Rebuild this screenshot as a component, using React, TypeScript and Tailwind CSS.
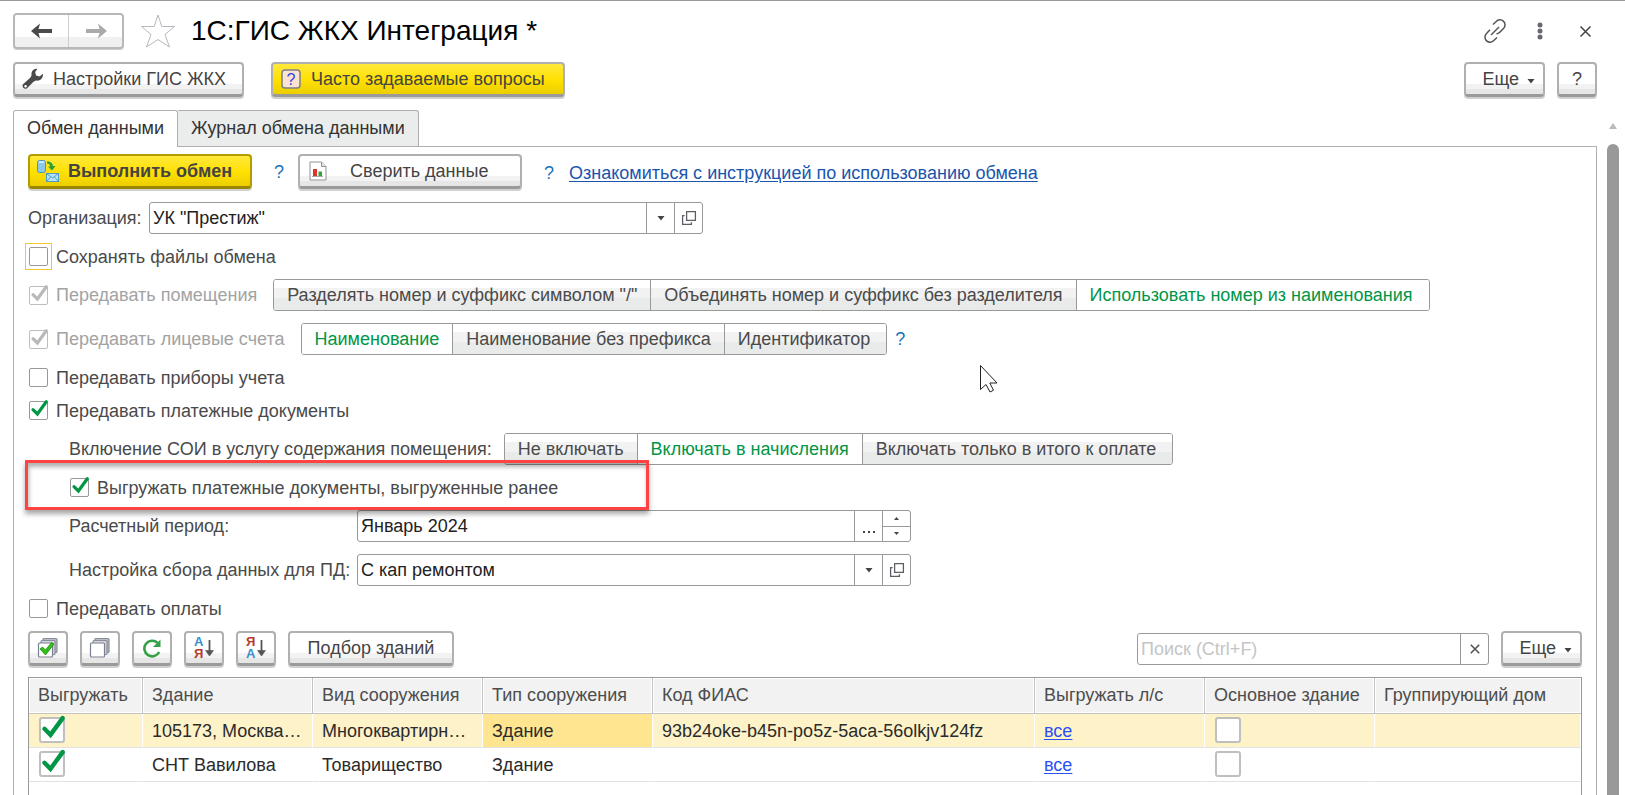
import type { ReactNode } from "react";

const cx = (...parts: (string | false | undefined)[]) => parts.filter(Boolean).join(" ");

const buttonBase =
  "flex h-[35px] shrink-0 items-center rounded-[4px] border-2 border-b-[3px] text-[18px] leading-5 shadow-[0_2px_0_#d0d0d0]";
const plain =
  "border-[#b0b0b0] border-b-[#9a9a9a] bg-[linear-gradient(#fff_66%,#f2f2f2_66%,#f2f2f2_84%,#e6e6e6_84%)] text-[#444]";
const yellow =
  "border-[#b0b0b0] border-b-[#9a9a9a] bg-[linear-gradient(#ffe93c,#ffe000_55%,#ecce00)] text-[#444]";
const yellowMain =
  "border-[#b39c00] border-b-[#998500] bg-[linear-gradient(#ffe93c,#ffe000_55%,#ecce00)] font-bold text-[#444]";

function Caret({ className = "" }: { className?: string }) {
  return (
    <svg className={className} width="8" height="5" viewBox="0 0 8 5" fill="#444" aria-hidden="true">
      <path d="M.5 0h7L4 4.500z" />
    </svg>
  );
}

function OpenIcon() {
  return (
    <svg width="16" height="16" viewBox="0 0 16 16" fill="none" stroke="#5c5f63" strokeWidth="1.3" aria-hidden="true">
      <path d="M5.6 1.6h8.8v8.8H5.6z" />
      <path d="M3.6 5.6H1.6v8.8h8.8v-2.2" />
    </svg>
  );
}

function CheckMark({ muted }: { muted?: boolean }) {
  return (
    <svg className="pointer-events-none absolute inset-0 h-full w-full overflow-visible" viewBox="0 0 19 19" aria-hidden="true">
      <path d="M4 8.600 8.400 13 17.300 .8" fill="none" stroke={muted ? "#b9b9b9" : "#009646"} strokeWidth="3.200" strokeLinecap="round" />
    </svg>
  );
}

type CheckProps = { label: string; checked?: boolean; disabled?: boolean; focused?: boolean };

function Check({ label, checked, disabled, focused }: CheckProps) {
  return (
    <label className={cx("flex items-center gap-2 whitespace-nowrap pl-px", disabled && "text-[#a3a3a3]")}>
      <span
        className={cx(
          "relative block h-[19px] w-[19px] shrink-0",
          focused && "outline outline-offset-[3px] outline-[#f2c830]",
        )}
      >
        <input
          type="checkbox"
          defaultChecked={checked}
          disabled={disabled}
          className={cx(
            "block h-full w-full appearance-none rounded-[2px] border bg-white",
            disabled ? "border-[#bdbdbd]" : "border-[#999]",
          )}
        />
        {checked && <CheckMark muted={disabled} />}
      </span>
      {label}
    </label>
  );
}

function CellCheck({ label, checked }: { label: string; checked?: boolean }) {
  return (
    <span className="relative mb-[2px] ml-px block h-[26px] w-[26px]">
      <input
        type="checkbox"
        aria-label={label}
        defaultChecked={checked}
        className="block h-full w-full appearance-none rounded-[3px] border-2 border-[#bfbfbf] bg-white"
      />
      {checked && <CheckMark />}
    </span>
  );
}

function Segmented({ name, options, value }: { name: string; options: string[]; value: string }) {
  return (
    <div role="radiogroup" aria-label={name} className="flex h-8 overflow-hidden rounded-[3px] border border-[#999]">
      {options.map((option) => (
        <label
          key={option}
          className={cx(
            "relative flex items-center whitespace-nowrap border-l border-[#999] px-[13px] first:border-l-0 last:pr-4",
            option === value
              ? "bg-white text-[#009646]"
              : "bg-[linear-gradient(#fff_27%,#f2f2f2_27%,#f2f2f2_60%,#e9ebea_60%)]",
          )}
        >
          <input type="radio" name={name} defaultChecked={option === value} className="sr-only" />
          {option}
        </label>
      ))}
    </div>
  );
}

function Field({ id, value, children }: { id: string; value: string; children: ReactNode }) {
  return (
    <div className="flex h-8 w-[554px] overflow-hidden rounded-[3px] border border-[#999] bg-white">
      <input id={id} defaultValue={value} className="min-w-0 flex-1 px-[3px] text-[#222] outline-none" />
      {children}
    </div>
  );
}

const fieldButton = "flex w-7 shrink-0 items-center justify-center border-l border-[#999]";

function Help() {
  return (
    <button type="button" className="text-[#1a72b8]">
      ?
    </button>
  );
}

function MoreButton() {
  return (
    <button type="button" className={cx(buttonBase, plain, "w-[81px] justify-end pr-2")}>
      Еще
      <Caret className="ml-2 mt-1" />
    </button>
  );
}

function StackIcon({ checked }: { checked?: boolean }) {
  return (
    <svg width="22" height="22" viewBox="0 0 22 22" aria-hidden="true">
      <g strokeWidth="1.200">
        <rect x="6" y="1.500" width="14" height="14" rx="1" fill="#b9bdc6" stroke="#8a8e99" />
        <rect x="4" y="3.500" width="14" height="14" rx="1" fill="#d3d6dc" stroke="#8a8e99" />
        <rect x="1.500" y="6" width="14" height="14" rx="1" fill="#fff" stroke="#7b8092" />
      </g>
      {checked && <path d="M3 12l2.500-2 3 3L14.500 5.500l2.500 1.500L8.500 18z" fill="#2fc11a" stroke="#1c8f0e" strokeWidth=".8" />}
    </svg>
  );
}

function SortIcon({ first, second }: { first: string; second: string }) {
  const tone = (letter: string) => (letter === "А" ? "#3a8ed0" : "#b8392b");
  return (
    <svg width="22" height="26" viewBox="0 0 22 26" aria-hidden="true">
      <g fontFamily="Liberation Sans, sans-serif" fontSize="13" fontWeight="bold">
        <text x="1" y="11" fill={tone(first)}>{first}</text>
        <text x="1" y="23" fill={tone(second)}>{second}</text>
      </g>
      <path d="M16.500 5v13" stroke="#555" strokeWidth="1.800" />
      <path d="M12.500 15.500h8L16.500 21z" fill="#555" stroke="#555" strokeWidth=".6" />
    </svg>
  );
}

const toolButtons = [
  { label: "Отметить все", icon: <StackIcon checked /> },
  { label: "Снять отметки", icon: <StackIcon /> },
  {
    label: "Обновить",
    icon: (
      <svg width="20" height="20" viewBox="0 0 20 20" aria-hidden="true">
        <path d="M17.200 14A7.800 7.800 0 1 1 15.500 4.800" fill="none" stroke="#35a047" strokeWidth="2.600" />
        <path d="M18.500 1.500v7.500H11z" fill="#35a047" />
      </svg>
    ),
  },
  { label: "По возрастанию", icon: <SortIcon first="А" second="Я" /> },
  { label: "По убыванию", icon: <SortIcon first="Я" second="А" /> },
];

const columns = [
  { title: "Выгружать", width: "w-[114px]" },
  { title: "Здание", width: "w-[170px]" },
  { title: "Вид сооружения", width: "w-[170px]" },
  { title: "Тип сооружения", width: "w-[170px]" },
  { title: "Код ФИАС", width: "w-[382px]" },
  { title: "Выгружать л/с", width: "w-[170px]" },
  { title: "Основное здание", width: "w-[170px]" },
  { title: "Группирующий дом", width: "" },
];

const buildings = [
  { name: "105173, Москва…", kind: "Многоквартирн…", type: "Здание", code: "93b24oke-b45n-po5z-5aca-56olkjv124fz", active: true },
  { name: "СНТ Вавилова", kind: "Товарищество", type: "Здание", code: "", active: false },
];

function BuildingsTable() {
  const cell = "h-[34px] overflow-hidden whitespace-nowrap border-b border-[#e2e2e2] border-r border-r-white p-0 pl-[9px]";
  return (
    <div className="flex-1 border border-b-0 border-[#999]">
      <table className="w-full table-fixed border-separate border-spacing-0 text-left">
        <thead>
          <tr>
            {columns.map((col) => (
              <th
                key={col.title}
                className={cx(
                  "h-9 whitespace-nowrap border-b border-r border-[#c4c4c4] bg-[#f2f2f2] p-0 pb-px pl-[9px] font-normal text-[#4d4d4d] shadow-[inset_0_0_0_1px_#fff] last:border-r-0",
                  col.width,
                )}
              >
                {col.title}
              </th>
            ))}
          </tr>
        </thead>
        <tbody className="text-[#2b2b2b]">
          {buildings.map((b) => (
            <tr key={b.name} className={b.active ? "bg-[#fdf2c8]" : "bg-white"}>
              <td className={cell}>
                <CellCheck label="Выгружать" checked />
              </td>
              <td className={cell}>{b.name}</td>
              <td className={cell}>{b.kind}</td>
              <td className={cx(cell, b.active && "bg-[#ffe590]")}>{b.type}</td>
              <td className={cell}>{b.code}</td>
              <td className={cell}>
                <a href="#accounts" className="text-[#2b50f5] underline underline-offset-2">
                  все
                </a>
              </td>
              <td className={cell}>
                <CellCheck label="Основное здание" />
              </td>
              <td className={cell} />
            </tr>
          ))}
        </tbody>
      </table>
    </div>
  );
}

function TitleBar() {
  return (
    <header className="flex h-9 items-center">
      <div className="flex h-9 w-[111px] rounded-[4px] border-2 border-[#b8b8b8] bg-[linear-gradient(#fff_70%,#f0f0f0_70%)] shadow-[0_1px_0_#ccc]">
        <button type="button" aria-label="Назад" className="flex flex-1 items-center justify-center border-r border-[#ccc]">
          <svg width="22" height="16" viewBox="0 0 22 16" fill="#4a4a4a" aria-hidden="true">
            <path d="M0 8 9 .5 7.500 6H21v4H7.500L9 15.500z" />
          </svg>
        </button>
        <button type="button" aria-label="Вперед" className="flex flex-1 items-center justify-center">
          <svg width="22" height="16" viewBox="0 0 22 16" fill="#aaa" aria-hidden="true">
            <path d="M22 8 13 .5 14.500 6H1v4h13.500L13 15.500z" />
          </svg>
        </button>
      </div>
      <button type="button" aria-label="В избранное" className="ml-4">
        <svg width="36" height="34" viewBox="0 0 36 34" fill="#fff" stroke="#b5b8be" aria-hidden="true">
          <path d="M18 1 21.800 12.500H34.500L25 20.500 29.500 33 18 25.500 6.500 33 11 20.500 1.500 12.500H14.200z" />
        </svg>
      </button>
      <h1 className="ml-[15px] text-[28px] leading-9 text-black">1С:ГИС ЖКХ Интеграция *</h1>
      <div className="ml-auto flex items-center pr-[5px]">
        <button type="button" aria-label="Получить ссылку">
          <svg width="24" height="24" viewBox="0 0 24 24" fill="none" stroke="#555" strokeWidth="1.500" aria-hidden="true">
            <path d="M10 5.500 13.200 2.500a4.800 4.800 0 0 1 7.500 6.800L16.500 13.500a4 4 0 0 1-3 1.200" />
            <path d="M14 18.500 10.800 21.500a4.800 4.800 0 0 1-7.500-6.800L7 10.800" />
            <path d="M8 16l8-8" />
          </svg>
        </button>
        <button type="button" aria-label="Меню" className="ml-7">
          <svg width="10" height="18" viewBox="0 0 10 18" fill="#666a70" aria-hidden="true">
            <circle cx="5" cy="3" r="2.500" />
            <circle cx="5" cy="9" r="2.500" />
            <circle cx="5" cy="15" r="2.500" />
          </svg>
        </button>
        <button type="button" aria-label="Закрыть" className="ml-[34px]">
          <svg width="13" height="13" viewBox="0 0 13 13" fill="none" stroke="#444" strokeWidth="1.500" aria-hidden="true">
            <path d="M1.500 1.500l10 10M11.500 1.500l-10 10" />
          </svg>
        </button>
      </div>
    </header>
  );
}

function CommandBar() {
  return (
    <div className="mt-[13px] flex">
      <button type="button" className={cx(buttonBase, plain, "w-[231px] pl-[7px]")}>
        <svg width="22" height="22" viewBox="0 0 22 22" fill="#4a4a4a" aria-hidden="true">
          <path d="M15.500 .8C11.500 .5 8.800 3.500 9.600 7.300L8.500 9.500 1 16.300c-1.600 1.800.9 5.400 3.800 4.300L11.500 13.800l2.500-1.200c3.700.8 7.300-2 7-6.800L17.500 8.500 14 7.500l-.8-3.500z" />
          <circle cx="3.600" cy="18.200" r="1.200" fill="#fff" />
        </svg>
        <span className="ml-[9px]">Настройки ГИС ЖКХ</span>
      </button>
      <button type="button" className={cx(buttonBase, yellow, "ml-[27px] w-[294px] pl-2")}>
        <svg width="20" height="20" viewBox="0 0 20 20" aria-hidden="true">
          <rect x="1" y="1" width="18" height="18" rx="3" fill="#fce3d0" stroke="#7c7f88" strokeWidth="1.500" />
          <text x="10" y="16" textAnchor="middle" fontFamily="Liberation Sans, sans-serif" fontSize="16" fill="#3344e6">?</text>
        </svg>
        <span className="ml-[10px]">Часто задаваемые вопросы</span>
      </button>
      <div className="ml-auto flex gap-3">
        <MoreButton />
        <button type="button" className={cx(buttonBase, plain, "w-10 justify-center")}>
          ?
        </button>
      </div>
    </div>
  );
}

function ExchangeActions() {
  return (
    <div className="flex h-9 items-start">
      <button type="button" className={cx(buttonBase, yellowMain, "w-[224px] pl-[7px]")}>
        <svg width="22" height="24" viewBox="0 0 22 24" aria-hidden="true">
          <rect x=".500" y="1.500" width="8" height="12" rx="2" fill="#8cc8ea" stroke="#4d94bd" />
          <ellipse cx="4.500" cy="3" rx="3" ry="1" fill="#d9f0fb" />
          <path d="M10 2.500c4 0 5.500 1.500 6 4.500h2.500L15 11.500 11 7.500h2.200c-.2-2-1.200-3-3.200-3z" fill="#2f9e2f" />
          <rect x="9.500" y="14.500" width="12" height="8" fill="#b8e2f7" stroke="#4d9bc8" />
          <path d="M9.500 14.500l6 4.500 6-4.500M9.500 22.500l4-4.500M21.500 22.500l-4-4.500" fill="none" stroke="#4d9bc8" />
        </svg>
        <span className="ml-[9px]">Выполнить обмен</span>
      </button>
      <div className="flex h-[35px] items-center px-[22px] pr-[14px]">
        <Help />
      </div>
      <button type="button" className={cx(buttonBase, plain, "w-[224px] pl-[9px]")}>
        <svg width="18" height="20" viewBox="0 0 18 20" aria-hidden="true">
          <path d="M1 1h11.500L17 5.500V19H1z" fill="#fff" stroke="#8d9299" />
          <path d="M12.500 1v4.500H17" fill="#e4e6e9" stroke="#8d9299" />
          <path d="M4 8h4v7H4z" fill="#e0332b" />
          <path d="M9.500 10.500h3.500V15H9.500z" fill="#2fa53a" />
          <path d="M3 15.500h11" stroke="#aaa" />
        </svg>
        <span className="ml-[23px]">Сверить данные</span>
      </button>
      <div className="flex h-[38px] items-center gap-[15px] pl-[22px]">
        <Help />
        <a href="#guide" className="text-[#1a55ad] underline underline-offset-2">
          Ознакомиться с инструкцией по использованию обмена
        </a>
      </div>
    </div>
  );
}

function ListToolbar() {
  return (
    <div className="flex h-[34px] items-start gap-3">
      {toolButtons.map((tool) => (
        <button key={tool.label} type="button" aria-label={tool.label} className={cx(buttonBase, plain, "w-10 justify-center")}>
          {tool.icon}
        </button>
      ))}
      <button type="button" className={cx(buttonBase, plain, "w-[166px] justify-center")}>
        Подбор зданий
      </button>
      <div className="ml-auto mt-[2px] flex h-8 w-[352px] overflow-hidden rounded-[3px] border border-[#999]">
        <input
          type="search"
          aria-label="Поиск"
          placeholder="Поиск (Ctrl+F)"
          className="min-w-0 flex-1 px-[3px] outline-none placeholder:text-[#c3c6c6]"
        />
        <button type="button" aria-label="Очистить" className={fieldButton}>
          <svg width="10" height="10" viewBox="0 0 10 10" stroke="#555" strokeWidth="1.600" aria-hidden="true">
            <path d="M.8 .8l8.400 8.400M9.200 .8L.8 9.200" />
          </svg>
        </button>
      </div>
      <MoreButton />
    </div>
  );
}

function ExchangePanel() {
  const checkRow = "flex h-[21px] items-center";
  return (
    <section className="flex flex-1 flex-col gap-3 border border-b-0 border-[#b0b0b0] px-[14px] pt-[7px]">
      <ExchangeActions />
      <div className="flex items-center">
        <label htmlFor="org" className="w-[121px]">Организация:</label>
        <Field id="org" value={'УК "Престиж"'}>
          <button type="button" aria-label="Выбрать" className={fieldButton}><Caret /></button>
          <button type="button" aria-label="Открыть" className={fieldButton}><OpenIcon /></button>
        </Field>
      </div>
      <div className={checkRow}>
        <Check label="Сохранять файлы обмена" focused />
      </div>
      <div className="flex items-center gap-4">
        <Check label="Передавать помещения" checked disabled />
        <Segmented
          name="Номер помещения"
          options={[
            'Разделять номер и суффикс символом "/"',
            "Объединять номер и суффикс без разделителя",
            "Использовать номер из наименования",
          ]}
          value="Использовать номер из наименования"
        />
      </div>
      <div className="flex items-center gap-4">
        <Check label="Передавать лицевые счета" checked disabled />
        <div className="flex items-center gap-2">
          <Segmented
            name="Номер лицевого счета"
            options={["Наименование", "Наименование без префикса", "Идентификатор"]}
            value="Наименование"
          />
          <Help />
        </div>
      </div>
      <div className={checkRow}>
        <Check label="Передавать приборы учета" />
      </div>
      <div className={checkRow}>
        <Check label="Передавать платежные документы" checked />
      </div>
      <div className="flex items-center gap-3 pl-[41px]">
        <span>Включение СОИ в услугу содержания помещения:</span>
        <Segmented
          name="Включение СОИ"
          options={["Не включать", "Включать в начисления", "Включать только в итого к оплате"]}
          value="Включать в начисления"
        />
      </div>
      <div className="relative flex h-[21px] items-center pl-[41px]">
        <Check label="Выгружать платежные документы, выгруженные ранее" checked />
        {/* callout frame around the option */}
        <div className="pointer-events-none absolute -left-[3px] -top-[17px] h-[50px] w-[624px] border-3 border-[#ff4343] shadow-[0_4px_5px_rgba(0,0,0,0.35),inset_1px_4px_4px_rgba(0,0,0,0.3)]" />
      </div>
      <div className="flex items-center pl-[41px]">
        <label htmlFor="period" className="w-[288px]">Расчетный период:</label>
        <Field id="period" value="Январь 2024">
          <button type="button" aria-label="Выбрать период" className={fieldButton}>
            <svg className="mt-3" width="12" height="2" viewBox="0 0 12 2" fill="#444" aria-hidden="true">
              <path d="M0 0h2v2H0zM5 0h2v2H5zM10 0h2v2h-2z" />
            </svg>
          </button>
          <div className="flex w-7 flex-col border-l border-[#999]">
            <button type="button" aria-label="Следующий" className="flex flex-1 items-center justify-center border-b border-[#999]">
              <svg width="5" height="3" viewBox="0 0 5 3" fill="#444" aria-hidden="true"><path d="M0 3h5L2.500 0z" /></svg>
            </button>
            <button type="button" aria-label="Предыдущий" className="flex flex-1 items-center justify-center">
              <svg width="5" height="3" viewBox="0 0 5 3" fill="#444" aria-hidden="true"><path d="M0 0h5L2.500 3z" /></svg>
            </button>
          </div>
        </Field>
      </div>
      <div className="flex items-center pl-[41px]">
        <label htmlFor="preset" className="w-[288px]">Настройка сбора данных для ПД:</label>
        <Field id="preset" value="С кап ремонтом">
          <button type="button" aria-label="Выбрать" className={fieldButton}><Caret /></button>
          <button type="button" aria-label="Открыть" className={fieldButton}><OpenIcon /></button>
        </Field>
      </div>
      <div className={checkRow}>
        <Check label="Передавать оплаты" />
      </div>
      <ListToolbar />
      <BuildingsTable />
    </section>
  );
}

export default function App() {
  return (
    <div className="relative flex h-screen overflow-hidden border-t border-[#999] bg-white font-['Liberation_Sans',Arial,sans-serif] text-[18px] leading-5 text-[#4a4a4a]">
      <main className="flex min-w-0 flex-1 flex-col pl-[13px] pt-3">
        <TitleBar />
        <CommandBar />
        <div role="tablist" className="mt-[13px] flex h-9 text-[#333]">
          <button type="button" role="tab" aria-selected="true" className="z-10 -mb-px rounded-t-[3px] border border-b-0 border-[#b0b0b0] bg-white px-[13px] pb-[2px]">
            Обмен данными
          </button>
          <button type="button" role="tab" aria-selected="false" className="rounded-tr-[3px] border border-b-0 border-l-0 border-[#b0b0b0] bg-[#ebedec] px-[13px] pb-px">
            Журнал обмена данными
          </button>
        </div>
        <ExchangePanel />
      </main>
      <div className="flex w-7 shrink-0 flex-col items-end pr-[6px] pt-[122px]" aria-hidden="true">
        <svg className="mr-[2px]" width="8" height="6" viewBox="0 0 8 6" fill="#bbb"><path d="M0 6h8L4 0z" /></svg>
        <div className="mt-[15px] w-3 flex-1 rounded-t-full bg-[#999]" />
      </div>
      <svg className="pointer-events-none absolute left-[979px] top-[363px]" width="20" height="29" viewBox="0 0 20 29" fill="#fff" stroke="#222" aria-hidden="true">
        <path d="M1.500 1.500v24l5.500-5 4 7.500 3.500-1.800-3.700-7.200h7.200z" />
      </svg>
    </div>
  );
}
